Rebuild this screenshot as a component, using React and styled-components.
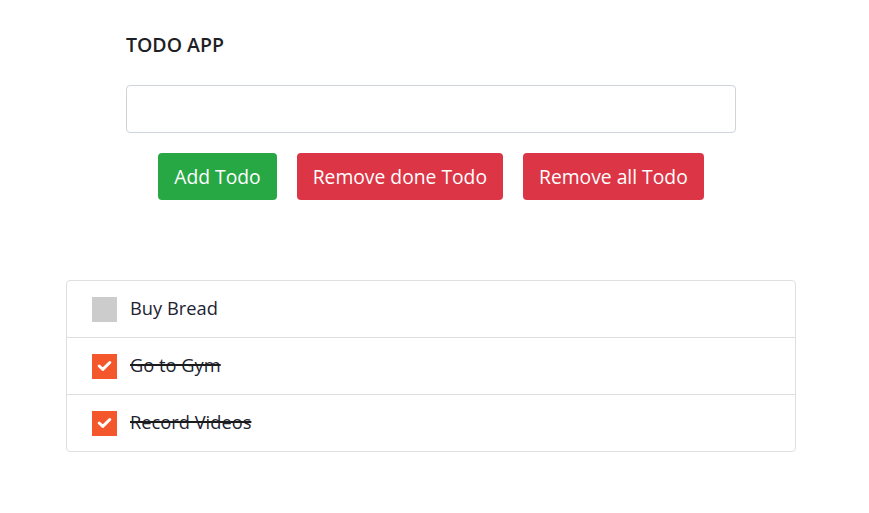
import React, { useState } from "react";
import styled, { createGlobalStyle } from "styled-components";

const GlobalStyle = createGlobalStyle`
  body {
    margin: 0;
    background: #fff;
    font-family: "Open Sans", "Noto Sans", sans-serif;
    color: #212529;
  }
`;

const Page = styled.div`
  width: 730px;
  margin: 0 0 0 66px;
  padding-top: 32px;
`;

const Header = styled.div`
  padding: 0 60px;
`;

const Title = styled.h1`
  margin: 0;
  font-size: 19.5px;
  font-weight: 600;
  line-height: 25px;
  color: #1d2125;
`;

const TodoInput = styled.input`
  display: block;
  box-sizing: border-box;
  width: 100%;
  height: 48px;
  margin-top: 28px;
  border: 1px solid #ced4da;
  border-radius: 4px;
  padding: 0 12px;
  font-size: 16px;
  font-family: inherit;
  outline: none;
`;

const Actions = styled.div`
  display: flex;
  justify-content: center;
  gap: 20px;
  margin-top: 20px;
`;

const Button = styled.button`
  height: 47px;
  padding: 0 16px;
  border: none;
  border-radius: 4px;
  background: ${(p) => (p.$variant === "success" ? "#28a745" : "#dc3545")};
  color: #fff;
  font-family: inherit;
  font-size: 19.3px;
  cursor: pointer;
`;

const List = styled.ul`
  list-style: none;
  margin: 80px 0 0;
  padding: 0;
  border: 1px solid #dfdfdf;
  border-radius: 4px;
`;

const Item = styled.li`
  display: flex;
  align-items: center;
  gap: 13px;
  height: 56px;
  padding-left: 25px;
  & + & {
    border-top: 1px solid #dfdfdf;
  }
`;

const Box = styled.span`
  width: 25px;
  height: 25px;
  display: flex;
  align-items: center;
  justify-content: center;
  background: ${(p) => (p.$checked ? "#f4572b" : "#cccccc")};
  cursor: pointer;
`;

const Label = styled.span`
  font-size: 18.3px;
  padding-bottom: 3px;
  color: #1d2331;
  text-decoration: ${(p) => (p.$done ? "line-through" : "none")};
  text-decoration-thickness: 2px;
  text-decoration-color: #1b1b1b;
`;

const Check = () => (
  <svg width="15" height="12" viewBox="0 0 15 12">
    <path d="M2.2 6 L5.8 9.3 L12.8 2.5" fill="none" stroke="#fff" strokeWidth="3" strokeLinecap="round" strokeLinejoin="round" />
  </svg>
);

const initial = [
  { text: "Buy Bread", done: false },
  { text: "Go to Gym", done: true },
  { text: "Record Videos", done: true },
];

export default function App() {
  const [todos, setTodos] = useState(initial);
  const toggle = (i) =>
    setTodos(todos.map((t, j) => (j === i ? { ...t, done: !t.done } : t)));

  return (
    <>
      <GlobalStyle />
      <Page>
        <Header>
          <Title>TODO APP</Title>
          <TodoInput />
          <Actions>
            <Button $variant="success">Add Todo</Button>
            <Button>Remove done Todo</Button>
            <Button>Remove all Todo</Button>
          </Actions>
        </Header>
        <List>
          {todos.map((t, i) => (
            <Item key={t.text}>
              <Box $checked={t.done} onClick={() => toggle(i)}>
                {t.done && <Check />}
              </Box>
              <Label $done={t.done}>{t.text}</Label>
            </Item>
          ))}
        </List>
      </Page>
    </>
  );
}
